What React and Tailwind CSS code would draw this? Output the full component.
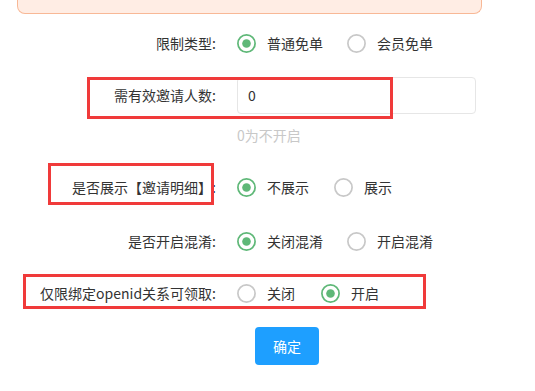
import React from "react";

function Radio({ checked, label, gap = "mr-[24px]" }) {
  return (
    <div className={`flex items-center ${gap}`}>
      <svg width="19" height="19" viewBox="0 0 19 19" className="mr-[11px] shrink-0">
        <circle cx="9.5" cy="9.5" r="8.6" fill="white" stroke={checked ? "#5FB878" : "#c8c8c8"} strokeWidth="1.7" />
        {checked && <circle cx="9.5" cy="9.5" r="4.3" fill="#5FB878" />}
      </svg>
      <span className="text-[14px] text-[#333]">{label}</span>
    </div>
  );
}

function Row({ label, children, className = "", h = "h-[38px]" }) {
  return (
    <div className={`flex items-center ${h} ${className}`}>
      <div className="w-[216px] shrink-0 text-right text-[14px] text-[#333] whitespace-nowrap">{label}</div>
      <div className="ml-[21px] flex items-center">{children}</div>
    </div>
  );
}

export default function App() {
  return (
    <div
      className="relative w-[535px] h-[391px] overflow-hidden bg-white"
      style={{ fontFamily: '"Noto Sans CJK SC", "Microsoft YaHei", sans-serif' }}
    >
      <div className="ml-[17px] w-[465px] h-[14px] rounded-b-[8px] border-x border-b border-[#f8b896] bg-[#ffede4]" />

      <Row label="限制类型:" className="mt-[10px]">
        <Radio checked label="普通免单" />
        <Radio label="会员免单" />
      </Row>

      <Row label="需有效邀请人数:" className="mt-[15px]" h="h-[37px]">
        <div className="w-[239px] h-[37px] rounded-[4px] border border-[#e6e6e6] flex items-center pl-[10px] text-[14px] text-[#333]">
          0
        </div>
      </Row>

      <div className="mt-[11px] pl-[237px] h-[20px] leading-[20px] text-[14px] text-[#c8c8c8]">0为不开启</div>

      <Row label="是否展示【邀请明细】:" className="mt-[23px]">
        <Radio checked label="不展示" gap="mr-[25px]" />
        <Radio label="展示" />
      </Row>

      <Row label="是否开启混淆:" className="mt-[16px]">
        <Radio checked label="关闭混淆" />
        <Radio label="开启混淆" />
      </Row>

      <Row label="仅限绑定openid关系可领取:" className="mt-[14px]">
        <Radio label="关闭" gap="mr-[26px]" />
        <Radio checked label="开启" />
      </Row>

      <div className="mt-[15px] pl-[255px]">
        <button className="w-[64px] h-[38px] rounded-[4px] bg-[#1E9FFF] text-white text-[14px]">确定</button>
      </div>

      {/* annotation boxes */}
      <div className="absolute left-[87px] top-[77px] w-[306px] h-[42px] border-[3px] border-[#f03a3a] pointer-events-none" />
      <div className="absolute left-[48px] top-[163px] w-[166px] h-[42px] border-[3px] border-[#f03a3a] pointer-events-none" />
      <div className="absolute left-[23px] top-[274px] w-[403px] h-[35px] border-[3px] border-[#f03a3a] pointer-events-none" />
    </div>
  );
}
